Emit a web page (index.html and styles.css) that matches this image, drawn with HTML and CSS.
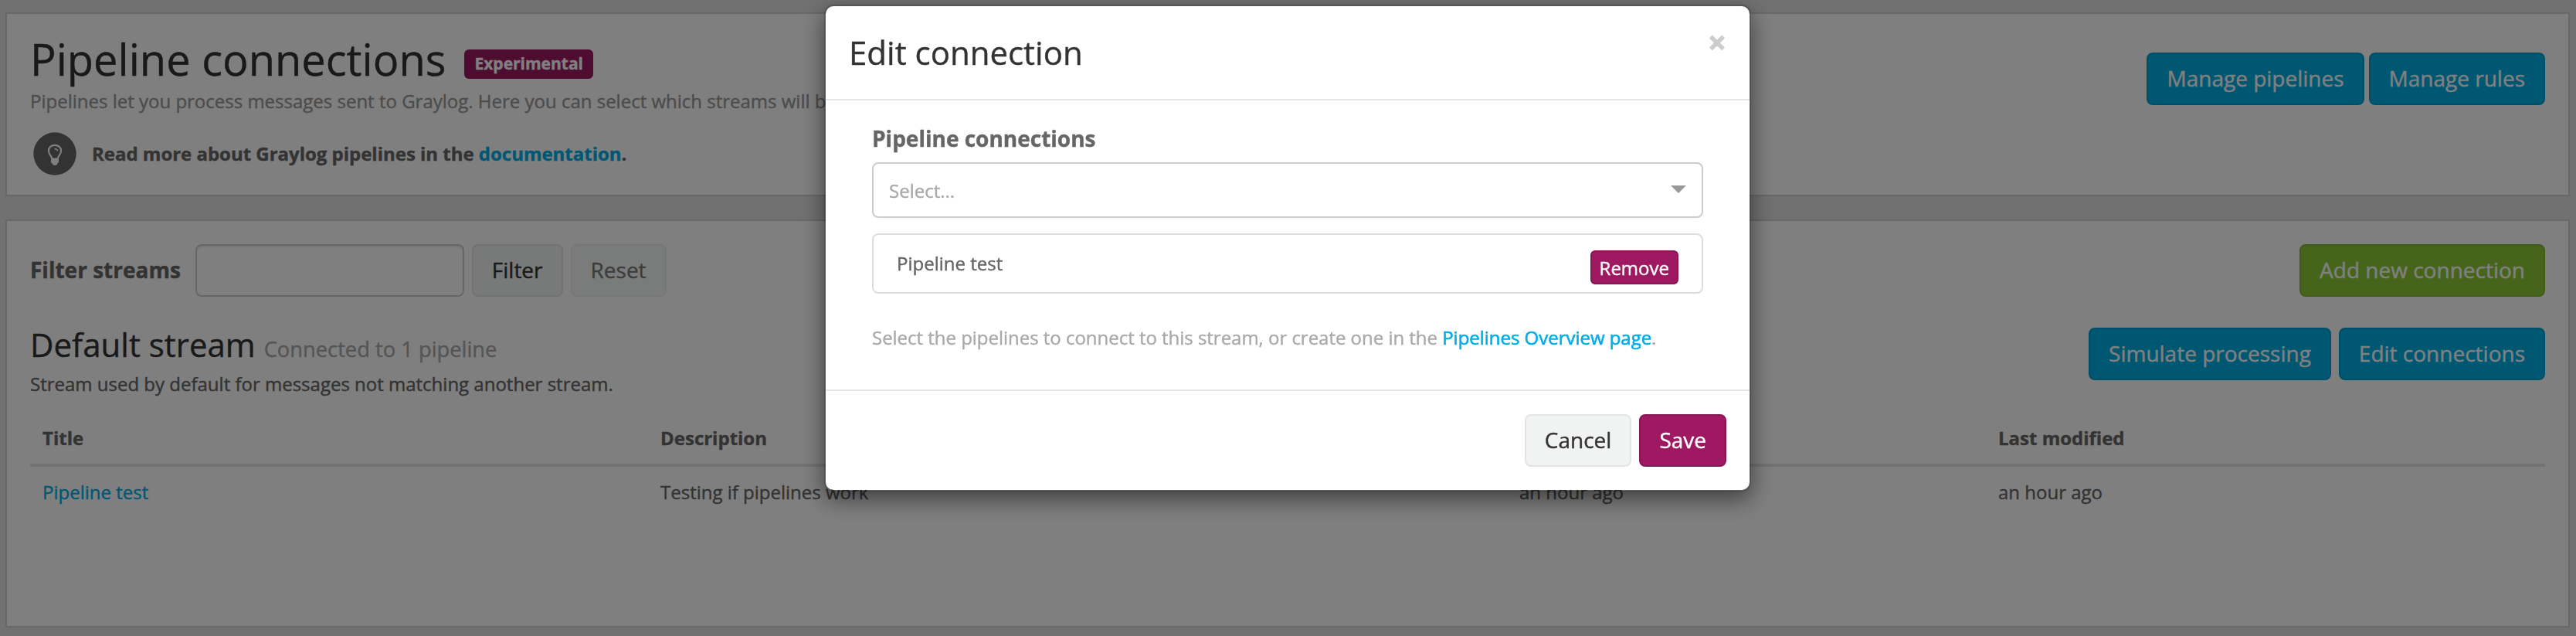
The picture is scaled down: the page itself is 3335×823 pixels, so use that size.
FILE: index.html
```html
<!DOCTYPE html>
<html lang="en">
<head>
<meta charset="utf-8">
<title>Pipeline connections</title>
<link rel="stylesheet" href="styles.css">
</head>
<body>
<main class="page">
  <section class="panel panel-header">
    <div class="intro">
      <h1 class="title">Pipeline connections <span class="badge">Experimental</span></h1>
      <p class="lead">Pipelines let you process messages sent to Graylog. Here you can select which streams will be</p>
      <div class="support">
        <svg class="bulb" viewBox="0 0 56 56" width="56" height="56" aria-hidden="true">
          <circle class="bulb-disc" cx="28" cy="28" r="27.700"/>
          <path class="bulb-glass" d="M24.200 34.500c0-4-4.300-5-4.300-10.500 0-4.200 3.500-7.200 8.100-7.200s8.100 3 8.100 7.200c0 5.500-4.300 6.500-4.300 10.500"/>
          <path class="bulb-shine" d="M27.500 21.500c2.500.1 3.800 1.100 4.200 2.900"/>
          <path class="bulb-base" d="M23 33.500h10v5c0 .8-.6 1.300-1.200 1.600-.5 1.900-1.800 2.900-3.800 2.900s-3.300-1-3.800-2.900c-.6-.3-1.200-.8-1.200-1.600z"/>
        </svg>
        <strong class="support-text">Read more about Graylog pipelines in the <a class="link" href="#">documentation</a>.</strong>
      </div>
    </div>
    <div class="actions actions-tight">
      <button class="btn btn-info">Manage pipelines</button>
      <button class="btn btn-info">Manage rules</button>
    </div>
  </section>

  <section class="panel panel-streams">
    <div class="toolbar">
      <form class="filter">
        <label class="filter-label" for="filter">Filter streams</label>
        <input class="filter-input" id="filter" type="text">
        <button class="btn btn-default" type="button">Filter</button>
        <button class="btn btn-default btn-disabled" type="button">Reset</button>
      </form>
      <button class="btn btn-success">Add new connection</button>
    </div>
    <div class="stream">
      <div>
        <h2 class="stream-title">Default stream <small class="stream-sub">Connected to 1 pipeline</small></h2>
        <p class="stream-text">Stream used by default for messages not matching another stream.</p>
      </div>
      <div class="actions">
        <button class="btn btn-info">Simulate processing</button>
        <button class="btn btn-info">Edit connections</button>
      </div>
    </div>
    <table class="table">
      <colgroup><col class="col-title"><col class="col-desc"><col class="col-created"><col></colgroup>
      <thead><tr><th>Title</th><th>Description</th><th></th><th>Last modified</th></tr></thead>
      <tbody><tr><td><a class="link" href="#">Pipeline test</a></td><td>Testing if pipelines work</td><td>an hour ago</td><td>an hour ago</td></tr></tbody>
    </table>
  </section>
</main>

<div class="backdrop">
  <div class="modal" role="dialog">
    <header class="modal-header">
      <h2 class="modal-title">Edit connection</h2>
      <button class="close">×</button>
    </header>
    <div class="modal-body">
      <div class="field-label">Pipeline connections</div>
      <div class="select"><span>Select...</span><i class="caret"></i></div>
      <div class="item"><span>Pipeline test</span><button class="btn btn-primary btn-small">Remove</button></div>
      <p class="help">Select the pipelines to connect to this stream, or create one in the <a class="link" href="#">Pipelines Overview page</a>.</p>
    </div>
    <footer class="modal-footer">
      <button class="btn btn-default">Cancel</button>
      <button class="btn btn-primary">Save</button>
    </footer>
  </div>
</div>
</body>
</html>
```
FILE: styles.css
```css
* { box-sizing: border-box; }
body {
  margin: 0;
  height: 823px;
  overflow: hidden;
  background: #e3e3e3;
  color: #666;
  font: 24px/34px "Open Sans", sans-serif;
  -webkit-text-stroke: .4px;
}
h1, h2, p { margin: 0; font-weight: 400; }
button { font-family: inherit; -webkit-text-stroke: .4px; }
.link { color: #00aee8; text-decoration: none; }

.page { display: flex; flex-direction: column; gap: 30px; padding: 16px 8px 0 7px; }
.panel { background: #fff; border: 2px solid #d1d1d1; padding: 0 30px; }
.panel-header { height: 238px; display: flex; justify-content: space-between; padding-top: 27px; }
.panel-streams { height: 528px; padding-top: 30px; }

.title { display: flex; align-items: center; gap: 24px; height: 62px; font-size: 56px; line-height: 62px; color: #333; }
.badge {
  height: 38px; margin-top: 14px; padding: 0 13px; border-radius: 6px;
  background: #9e1862; color: #fff; font-size: 21px; font-weight: 700; line-height: 36px;
}
.lead { margin-top: 7px; color: #999; white-space: nowrap; }
.support { display: flex; align-items: center; gap: 20px; height: 56px; margin: 23px 0 0 4px; }
.support-text { letter-spacing: -.02px; }
.bulb-disc { fill: #666; }
.bulb-glass, .bulb-shine { fill: none; stroke: #fff; stroke-width: 2.2; }
.bulb-shine { stroke-width: 1.3; }
.bulb-base { fill: #fff; }

.actions { display: flex; gap: 10px; }
.actions-tight { gap: 6px; margin-top: 23px; }
.btn {
  height: 68px; padding: 0 24px 2px; border: 2px solid; border-radius: 8px;
  font-size: 28px; line-height: 40px; white-space: nowrap;
}
.btn-info { background: #00aee5; border-color: #009dce; color: #fff; }
.btn-success { background: #8cca35; border-color: #7eb62f; color: #fff; }
.btn-default { background: #f1f2f2; border-color: #e3e5e5; color: #333; }
.btn-primary { background: #9e1862; border-color: #891555; color: #fff; }
.btn-disabled { opacity: .65; }
.btn-small { height: 44px; padding: 1px 10px 0; border-radius: 6px; font-size: 24px; line-height: 36px; }

.toolbar { display: flex; justify-content: space-between; height: 68px; }
.filter { display: flex; align-items: center; gap: 10px; }
.filter-label { margin: -2px 9px 0 0; font-size: 28px; font-weight: 700; line-height: 40px; }
.filter-input {
  width: 348px; height: 68px; border: 2px solid #ccc; border-radius: 8px;
  background: #fff; box-shadow: inset 0 2px 2px rgba(0, 0, 0, .075);
}
.stream { display: flex; justify-content: space-between; margin-top: 40px; height: 90px; }
.stream-title { height: 46px; margin-top: -1px; font-size: 42px; line-height: 46px; color: #333; }
.stream-sub { font-size: 27.3px; color: #aaa; }
.stream-text { margin-top: 11px; }
.stream .actions { height: 68px; }

.table { width: 100%; margin-top: 20px; border-collapse: collapse; table-layout: fixed; }
.table th, .table td { padding: 16px; text-align: left; }
.table th { border-bottom: 4px solid #e3e5e5; }
.col-title { width: 800px; }
.col-desc { width: 1112px; }
.col-created { width: 620px; }

.backdrop { position: fixed; inset: 0; background: rgba(0, 0, 0, .5); }
.modal {
  position: absolute; left: 1067px; top: 6px; width: 1200px; height: 630px;
  display: flex; flex-direction: column;
  background: #fff; background-clip: padding-box;
  border: 2px solid rgba(0, 0, 0, .2); border-radius: 12px;
  box-shadow: 0 10px 30px rgba(0, 0, 0, .5);
}
.modal-header {
  display: flex; justify-content: space-between; height: 122px;
  padding: 30px; border-bottom: 2px solid #e5e5e5;
}
.modal-title { font-size: 42px; line-height: 60px; color: #333; }
.close {
  height: 42px; margin-top: -5px; padding: 0; border: 0; background: none;
  color: #ccc; font-size: 42px; font-weight: 700; line-height: 42px;
  -webkit-text-stroke: 1px;
}
.modal-body { flex: 1; padding: 29px 60px 0; }
.field-label { height: 51px; font-size: 28px; font-weight: 700; line-height: 40px; }
.select {
  display: flex; align-items: center; justify-content: space-between;
  height: 72px; padding: 1px 20px 0; border: 2px solid #ccc; border-radius: 8px; color: #aaa;
}
.caret { margin-top: -3px; border: 10px solid transparent; border-top-color: #999; border-bottom: 0; }
.item {
  display: flex; justify-content: space-between; height: 78px; margin-top: 20px;
  padding: 20px 30px; border: 2px solid #ddd; border-radius: 8px;
}
.help { margin-top: 40px; color: #aaa; letter-spacing: -.025px; }
.help .link { -webkit-text-stroke: .6px; }
.modal-footer {
  display: flex; justify-content: flex-end; gap: 10px; height: 130px;
  padding: 30px; border-top: 2px solid #e5e5e5;
}
```
